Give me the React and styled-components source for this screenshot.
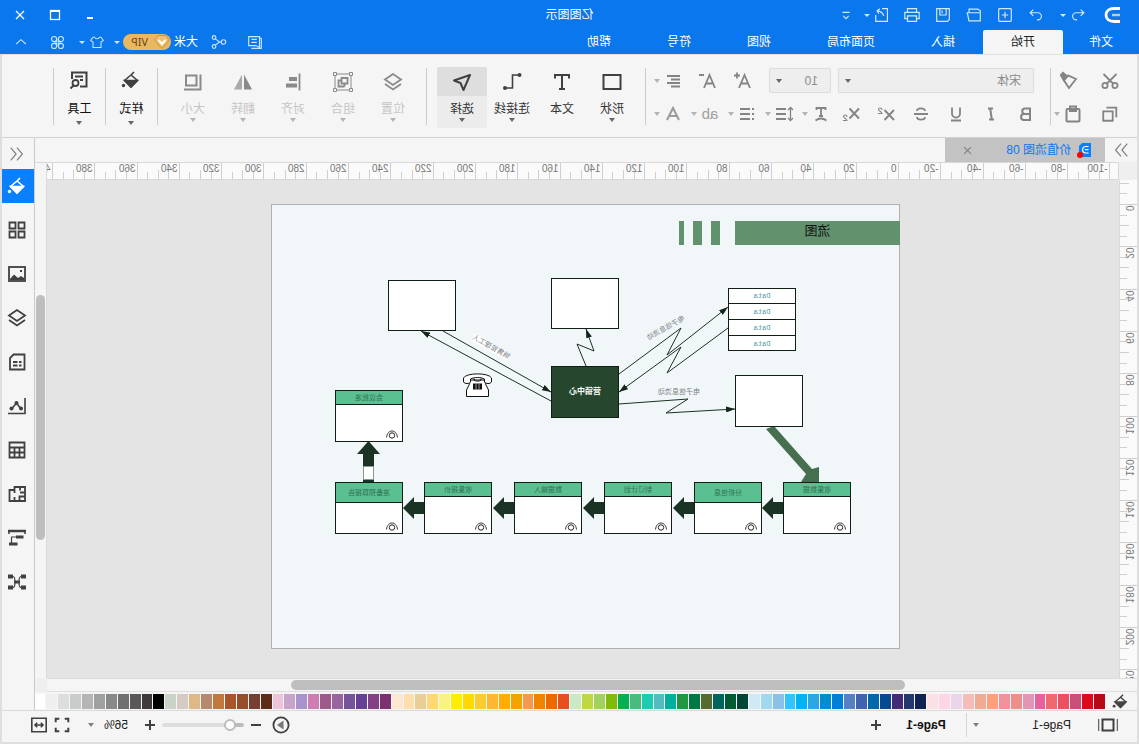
import React from "react";
import styled, { createGlobalStyle } from "styled-components";

const UI_FONT = `"Liberation Sans", "Noto Sans CJK SC", sans-serif`;

const GlobalStyle = createGlobalStyle`
  * {
    box-sizing: border-box;
  }
  body {
    margin: 0;
    background: #f5f5f5;
  }
  button, select, input {
    font: inherit;
    color: inherit;
    margin: 0;
    padding: 0;
    border: 0;
    background: none;
  }
  button svg {
    flex: none;
  }
`;

// the whole window is flipped horizontally
const Window = styled.div`
  display: flex;
  flex-direction: column;
  height: 100vh;
  transform: scaleX(-1);
  background: #f5f5f5;
  font-family: ${UI_FONT};
  font-size: 12px;
  line-height: 16px;
  color: #333;
  overflow: hidden;
`;

const Header = styled.header`
  flex: none;
  background: #0a77ec;
  color: #fff;
`;

const TitleRow = styled.div`
  display: grid;
  grid-template-columns: 1fr auto 1fr;
  align-items: center;
  height: 30px;
`;

const Title = styled.h1`
  margin: 0;
  font-size: 12px;
  font-weight: 400;
`;

const QuickBar = styled.div`
  display: flex;
  align-items: center;
  color: #d4e8fd;
`;

const LogoBox = styled.div`
  display: flex;
  justify-content: center;
  width: 46px;
  padding-left: 8px;
`;

const QuickBtn = styled.button`
  display: flex;
  align-items: center;
  justify-content: ${(p) => (p.$split ? "flex-start" : "center")};
  gap: 3px;
  width: ${(p) => p.$w || 31}px;
  height: 24px;
  padding-left: ${(p) => (p.$split ? 6 : 0)}px;
`;

const WindowControls = styled.div`
  display: flex;
  justify-content: flex-end;
  padding-right: 3px;
`;

const MenuRow = styled.div`
  display: flex;
  justify-content: space-between;
  height: 24px;
`;

const MenuTabs = styled.nav`
  display: flex;
`;

const MenuTab = styled.button`
  padding: 0 ${(p) => (p.$first ? 26 : 28)}px;
  border-radius: 2px 2px 0 0;
  background: ${(p) => (p.$active ? "#f5f5f5" : "transparent")};
  color: ${(p) => (p.$active ? "#222" : "#fff")};
`;

const AccountBar = styled.div`
  display: flex;
  align-items: center;
  gap: 9px;
  padding-right: 13px;
  color: #cfe4fc;
`;

const Cluster = styled.div`
  display: flex;
  align-items: center;
  gap: ${(p) => p.$gap || 4}px;
  margin-right: ${(p) => p.$after || 0}px;
`;

const PlainBtn = styled.button`
  display: flex;
  align-items: center;
  justify-content: center;
  min-width: 16px;
  height: 20px;
`;

const UserName = styled.span`
  color: #fff;
`;

const VipBadge = styled.span`
  display: flex;
  align-items: center;
  justify-content: flex-end;
  gap: 6px;
  width: 48px;
  height: 16px;
  padding-right: 8px;
  border-radius: 8px;
  background: #e9b95f;
  color: #6b4713;
  font-family: "Noto Sans", sans-serif;
  font-size: 11px;
`;

const Caret = styled.span`
  flex: none;
  width: 0;
  height: 0;
  border: 3px solid transparent;
  border-top: ${(p) => p.$h || 4}px solid ${(p) => p.$color || "currentColor"};
  border-bottom: 0;
`;

const Body = styled.div`
  flex: 1;
  display: flex;
  flex-direction: column;
  min-height: 0;
  border: 2px solid #dedede;
  border-top: 0;
`;

/* ---------- ribbon ---------- */

const Ribbon = styled.section`
  flex: none;
  display: flex;
  height: 84px;
  padding: 12px 0 0 17px;
  border-top: 1px solid #e0e0e0;
  border-bottom: 1px solid #d2d2d2;
  color: #848484;
`;

const Separator = styled.div`
  flex: none;
  width: 1px;
  height: 57px;
  margin: 1px ${(p) => p.$after || 0}px 0 ${(p) => p.$before || 0}px;
  background: #cdcdcd;
`;

const RibbonGroup = styled.div`
  flex: none;
  display: flex;
  flex-direction: column;
  gap: 11px;
  width: ${(p) => p.$w}px;
  padding-top: 1px;
`;

const RibbonRow = styled.div`
  display: flex;
  align-items: center;
  justify-content: space-between;
  height: ${(p) => p.$h || 25}px;
`;

const RibbonBtn = styled.button`
  display: flex;
  align-items: center;
  justify-content: center;
  gap: 3px;
  width: ${(p) => p.$w || 20}px;
  height: 20px;
`;

const SelectBox = styled.label`
  position: relative;
  display: flex;
  align-items: center;
  width: ${(p) => p.$w}px;
  height: 25px;
  border: 1px solid #dcdce0;
  border-radius: 2px;
  background: #eee;

  select {
    width: 100%;
    height: 100%;
    padding-left: 12px;
    appearance: none;
    color: #8a8a8a;
  }
  span {
    position: absolute;
    right: 6px;
    color: #666;
  }
`;

const HighlightText = styled.span`
  width: 20px;
  font-size: 15px;
  color: #a0a0a0;
`;

const ToolBtn = styled.button`
  flex: none;
  display: flex;
  flex-direction: column;
  align-items: center;
  width: ${(p) => p.$w || 50}px;
  height: 61px;
  border-radius: 2px;
  background: ${(p) => (p.$active ? "#ececec" : "transparent")};
  color: ${(p) => (p.$muted ? "#c6c6c6" : p.$strong ? "#111" : "#333")};
`;

const ToolIcon = styled.span`
  display: flex;
  align-items: center;
  justify-content: center;
  width: 100%;
  height: 29px;
  padding-bottom: ${(p) => (p.$strong ? 4 : 0)}px;
  margin-bottom: 5px;
  border-radius: 2px 2px 0 0;
  background: ${(p) => (p.$active ? "#dedede" : "transparent")};
  color: ${(p) => (p.$muted ? "#8a8a8a" : "#404040")};
`;

const ToolLabel = styled.span`
  margin-bottom: ${(p) => (p.$strong ? 4 : 1)}px;
`;

/* ---------- workspace ---------- */

const Middle = styled.div`
  flex: 1;
  display: flex;
  min-height: 0;
`;

const Main = styled.main`
  flex: 1;
  display: flex;
  flex-direction: column;
  min-width: 0;
`;

const DocTabs = styled.div`
  flex: none;
  display: flex;
  align-items: center;
  height: 24px;
  color: #808080;
`;

const Collapse = styled.button`
  display: flex;
  align-items: center;
  justify-content: center;
  width: 32px;
  height: 24px;
`;

const DocTab = styled.div`
  display: flex;
  align-items: center;
  gap: 6px;
  width: 160px;
  height: 24px;
  padding: 0 14px 0 12px;
  background: #c3c3c3;

  a {
    flex: 1;
    color: #0a77ec;
    text-decoration: none;
  }
`;

const Workspace = styled.div`
  flex: 1;
  display: grid;
  grid-template-columns: 18px 1fr 12px;
  grid-template-rows: 18px 1fr 14px;
  min-height: 0;
`;

const Corner = styled.div`
  background: #efefef;
`;

const RulerTop = styled.div`
  overflow: hidden;
  border-top: 1px solid #d9d9d9;
  border-bottom: 1px solid #d9d9d9;
  border-left: 1px solid #d9d9d9;
  background: #fafafa;
`;

const RulerSide = styled.div`
  overflow: hidden;
  border-right: 1px solid #d9d9d9;
  background: #fafafa;
`;

const RulerSvg = styled.svg`
  display: block;
  width: 100%;
  height: 100%;
  font-size: 10px;
  fill: #777;
`;

const ScrollY = styled.div`
  grid-row: 1 / 3;
  grid-column: 3;
  padding: 132px 1px 0;
  border-top: 1px solid #d9d9d9;
  border-left: 1px solid #dcdcdc;
`;

const ThumbY = styled.div`
  height: 64%;
  border-radius: 5px;
  background: #bebebe;
`;

const ScrollX = styled.div`
  grid-column: 1 / 3;
  padding: 1px 244px 0 232px;
  border-top: 1px solid #dedede;
  border-bottom: 1px solid #dedede;
`;

const ThumbX = styled.div`
  height: 10px;
  border-radius: 5px;
  background: #bebebe;
`;

const Canvas = styled.div`
  overflow: hidden;
  padding: 24px 0 0 219px;
  background: #e4e4e4;
`;

const Page = styled.div`
  position: relative;
  width: 629px;
  height: 445px;
  border: 1px solid #b0b0b0;
  background: #f1f7f8;
  font-size: 7px;
  line-height: 8px;
  color: #54806c;
`;

const Wires = styled.svg`
  position: absolute;
  left: -1px;
  top: -1px;
`;

const Shape = styled.div`
  position: absolute;
  left: ${(p) => p.$x - 1}px;
  top: ${(p) => p.$y - 1}px;
  width: ${(p) => p.$w || 68}px;
  height: ${(p) => p.$h || 52}px;
`;

const Band = styled(Shape)`
  background: #62916d;
  color: #111;
  font-size: 13px;
  line-height: 20px;
  text-align: center;
`;

const Box = styled(Shape)`
  border: 1px solid #0f1f16;
  background: #fff;
`;

const Hub = styled(Box)`
  display: flex;
  align-items: center;
  justify-content: center;
  background: #26472e;
  color: #fff;
  font-size: 8px;
  font-weight: 700;
`;

const StepHead = styled.div`
  display: flex;
  align-items: center;
  justify-content: center;
  height: ${(p) => (p.$tall ? 20 : 14)}px;
  border-bottom: 1px solid #0f1f16;
  background: #5abf91;
  color: #2f7353;
`;

const DataRow = styled.div`
  display: flex;
  align-items: center;
  justify-content: center;
  height: ${(p) => (p.$edge ? 15 : 16)}px;
  border-bottom: ${(p) => (p.$last ? 0 : 1)}px solid #0f1f16;
  font-family: "Liberation Mono", monospace;
  color: #4f9aa8;
`;

const Note = styled(Shape)`
  width: auto;
  height: 8px;
  white-space: nowrap;
  transform: rotate(${(p) => p.$angle || 0}deg);
  background: ${(p) => (p.$paper ? "#fff" : "transparent")};
  color: #7d7f86;
`;

/* ---------- palette, rail, status bar ---------- */

const Palette = styled.div`
  flex: none;
  display: flex;
  align-items: center;
  height: 18px;
  color: #444;
`;

const PaletteIcon = styled.div`
  display: flex;
  justify-content: center;
  width: 32px;
`;

const Swatches = styled.div`
  flex: 1;
  display: flex;
  gap: 1px;
`;

const Swatch = styled.button`
  flex: 1;
  height: 15px;
  background: ${(p) => p.$color};
`;

const Rail = styled.aside`
  flex: none;
  display: flex;
  flex-direction: column;
  width: 33px;
  border-left: 1px solid #cbcbcb;
  color: #808080;
`;

const RailTop = styled.div`
  display: flex;
  align-items: center;
  justify-content: center;
  height: 31px;
  padding-left: 2px;
`;

const RailBtn = styled.button`
  display: flex;
  align-items: center;
  justify-content: center;
  height: 34px;
  padding-left: 2px;
  margin-bottom: 10px;
  background: ${(p) => (p.$active ? "#0a80ff" : "transparent")};
  color: ${(p) => (p.$active ? "#fff" : "#404040")};
`;

const StatusBar = styled.footer`
  flex: none;
  display: flex;
  align-items: center;
  justify-content: space-between;
  height: 32px;
  padding: 0 28px 4px 19px;
  border-top: 1px solid #dadada;
  color: #404040;
`;

const PagePicker = styled.label`
  position: relative;
  display: flex;
  align-items: center;
  width: 123px;
  height: 24px;
  margin-left: 8px;
  border-right: 1px solid #d6d6d6;

  select {
    width: 100%;
    padding-left: 18px;
    appearance: none;
    color: #222;
  }
  span {
    position: absolute;
    right: 6px;
    color: #808080;
  }
`;

const PageTab = styled.button`
  width: 78px;
  color: #111;
  font-weight: 700;
`;

const ZoomSlider = styled.input`
  appearance: none;
  width: 82px;
  height: 4px;
  border-radius: 2px;
  background: linear-gradient(to right, #bcbcbc 18%, #dedede 18%);

  &::-webkit-slider-thumb {
    appearance: none;
    width: 12px;
    height: 12px;
    border: 2px solid #bcbcbc;
    border-radius: 50%;
    background: #fff;
  }
`;

const ZoomValue = styled.span`
  color: #222;
`;

/* ---------- icons ---------- */

const ICONS = {
  undo: (
    <path d="M7 4 L3.5 7.5 L7 11 M4 7.5 H12 a4 4 0 0 1 4 4 a4 4 0 0 1 -4 4 H11" />
  ),
  redo: (
    <path d="M13 4 L16.500 7.5 L13 11 M16 7.5 H8 a4 4 0 0 0 -4 4 a4 4 0 0 0 4 4 H9" />
  ),
  plusBox: (
    <>
      <rect x="3" y="3" width="14" height="14" rx="1" />
      <path d="M10 6.500 V13.500 M6.500 10 H13.500" />
    </>
  ),
  folder: (
    <path d="M3 8 V16.500 H15.500 L17.500 7.500 H3 M3 8 V5 L6 3.500 H15.500 V7.500" />
  ),
  save: (
    <path d="M3 3 H17 V17 H5 L3 15 Z M6.500 3 V10 H13.500 V3 M11 5 V8" />
  ),
  print: (
    <path d="M5 7 V3 H15 V7 M5 14 H2 V7 H18 V14 H15 M5 11 H15 V17 H5 Z" />
  ),
  export: (
    <path d="M10 3 H4 V17 H17 V10 M8 11 C9 8 11 6 15 5.500 M12.500 3 L15.500 5.500 L13.500 8.500" />
  ),
  more: <path d="M6 7 H14 M7 11 L10 14 L13 11" />,
  minimize: <path d="M7 13 H13" strokeWidth="2" />,
  maximize: (
    <>
      <rect x="5.500" y="5.500" width="9" height="9" />
      <path d="M5.500 6 H14.500" strokeWidth="2" />
    </>
  ),
  close: <path d="M6 6 L14 14 M14 6 L6 14" />,
  comment: (
    <path d="M5 4 H17 V14 H9 L5 16 Z M5 6 H3 V17 H14 M8 7 H14 M8 10.500 H14" />
  ),
  share: (
    <>
      <circle cx="5" cy="10" r="2.500" />
      <circle cx="15.500" cy="5" r="2" />
      <circle cx="15.500" cy="15" r="2" />
      <path d="M7.500 10 H9.500 L14 6.500 M9.500 10 L14 13.500" />
    </>
  ),
  shirt: (
    <path d="M7 4 C8 6.500 12 6.500 13 4 L15 4 L18 8 L15 10 V17 H5 V10 L2 8 L5 4 Z" />
  ),
  clover: (
    <>
      <circle cx="6" cy="6" r="3" />
      <circle cx="14" cy="6" r="3" />
      <circle cx="6" cy="14" r="3" />
      <circle cx="14" cy="14" r="3" />
      <path d="M9 6 V9 H6 M11 6 V9 H14 M9 14 V11 H6 M11 14 V11 H14" />
    </>
  ),
  chevUp: <path d="M4 12.500 L10 7 L16 12.500" />,
  cut: (
    <g strokeWidth="1.800">
      <circle cx="5" cy="14.500" r="2.600" />
      <circle cx="15" cy="14.500" r="2.600" />
      <path d="M3.500 3 L13 12.500 M16.500 3 L7 12.500" />
    </g>
  ),
  brush: (
    <>
      <path d="M3 8 L11 4.500 L15 9.500 L10 17 Z" strokeWidth="1.900" />
      <path d="M11.500 5.500 L16 1.500 L18.500 4 L15.500 9.500 Z" fill="currentColor" />
    </>
  ),
  copy: (
    <path d="M7 7 H17.500 V17.500 H7 Z M3 13.500 V3 H14" strokeWidth="2" />
  ),
  paste: (
    <>
      <rect x="3.500" y="5" width="13" height="12.500" rx="1" strokeWidth="2" />
      <path d="M7 2.500 H13 V7 H7 Z" strokeWidth="2" />
    </>
  ),
  growFont: (
    <path d="M3 17 L8.500 4 L14 17 M5 12.500 H12 M13 4.500 H19 M16 1.500 V7.500" strokeWidth="1.800" />
  ),
  shrinkFont: (
    <path d="M3 17 L8.500 4 L14 17 M5 12.500 H12 M14 4 H19" strokeWidth="1.800" />
  ),
  alignLeft: <path d="M3 5 H16 M3 8.500 H12 M3 12 H16 M3 15.500 H12" strokeWidth="2" />,
  bold: (
    <path d="M6 4.500 H11 a2.700 2.700 0 0 1 0 5.500 H6 Z M6 10 H12 a3 3 0 0 1 0 6 H6 Z" strokeWidth="2" />
  ),
  italic: <path d="M7 4.500 H12 M8 15.500 H13 M9.200 4.500 L10.800 15.500" strokeWidth="2" transform="matrix(-1 0 0 1 20 0)" />,
  underline: (
    <path d="M6 3.500 V9.500 a4 4 0 0 0 8 0 V3.500 M5 16.500 H15" strokeWidth="1.800" />
  ),
  strike: (
    <path d="M14 7 C14 3.500 6 3.500 6 7 M6 13 C6 16.500 14 16.500 14 13 M3 10 H17" strokeWidth="1.800" />
  ),
  sup: (
    <>
      <path d="M2 6 L11.500 16 M11.500 6 L2 16" strokeWidth="1.900" />
      <path d="M14 6 C14 3.500 17.500 3.500 17.500 5.500 C17.500 7 14 7.500 14 9.500 H18" strokeWidth="1.100" />
    </>
  ),
  sub: (
    <>
      <path d="M2 4.500 L11.500 14.500 M11.500 4.500 L2 14.500" strokeWidth="1.900" />
      <path d="M14 13 C14 10.500 17.500 10.500 17.500 12.500 C17.500 14 14 14.500 14 16.500 H18" strokeWidth="1.100" />
    </>
  ),
  textFx: (
    <path d="M5.500 6 V4 H14.500 V6 M10 4 V12 M8 12 H12 M4.500 16.500 C8 14 12 14 15.500 16.500" strokeWidth="1.800" />
  ),
  spacing: (
    <>
      <path d="M8 5 H18 M8 10 H18 M8 15 H18" strokeWidth="2" />
      <path d="M3.500 4 V16 M1 6 L3.500 3.500 L6 6 M1 14 L3.500 16.500 L6 14" />
    </>
  ),
  bullets: (
    <path d="M7 5 H17 M7 10 H17 M7 15 H17 M3 5 H5 M3 10 H5 M3 15 H5" strokeWidth="2" />
  ),
  fontColor: (
    <path d="M4 16 L10 4 L16 16 M6.500 12 H13.500" strokeWidth="2" opacity=".8" />
  ),
  shape: <rect x="1.500" y="3" width="17" height="14" strokeWidth="2" />,
  text: (
    <path d="M3 6.500 V3 H17 V6.500 M10 3 V17 M7 17 H13" strokeWidth="2" />
  ),
  connector: (
    <>
      <path d="M3 3 H9.500 V16 H16" strokeWidth="1.600" />
      <circle cx="2.500" cy="3" r="2" fill="currentColor" stroke="none" />
      <circle cx="17" cy="16" r="2" fill="currentColor" stroke="none" />
    </>
  ),
  pointer: (
    <path d="M2 3 L18 8.500 L11.500 11 L8.500 18 Z" strokeWidth="2" strokeLinejoin="round" />
  ),
  layers: (
    <path d="M10 2 L18 7.500 L10 13 L2 7.500 Z M2 12 L10 17.500 L18 12" strokeWidth="1.800" />
  ),
  group: (
    <>
      <path d="M2 2 H18 V18 H2 Z" strokeWidth="1" />
      <path d="M5.500 6 H11.500 V11.500 H5.500 Z M8.500 14.500 H14.500 V8.500 H12 M8.500 14.500 V12" strokeWidth="1.800" />
      <path d="M.500 .500 H3.500 V3.500 H.500 Z M16.500 .500 H19.500 V3.500 H16.500 Z M.500 16.500 H3.500 V19.500 H.500 Z M16.500 16.500 H19.500 V19.500 H16.500 Z" fill="#f5f5f5" strokeWidth="1" />
    </>
  ),
  alignObj: (
    <>
      <path d="M3.500 1.500 V18.500" strokeWidth="1.800" />
      <path d="M6 5 H14 V9 H6 Z M6 11.500 H17 V15.500 H6 Z" fill="currentColor" stroke="none" />
    </>
  ),
  flip: (
    <>
      <path d="M9 2.500 V17.500 H1 Z" fill="currentColor" stroke="none" />
      <path d="M11 2.500 V17.500 H19 Z" fill="currentColor" stroke="none" opacity=".7" />
    </>
  ),
  size: (
    <path d="M6.500 3.500 H17 V13.500 H6.500 Z M2.500 2.500 V17.500 H19" strokeWidth="2" />
  ),
  bucket: (
    <>
      <path d="M10 5 L16.500 10.500 L10 17 L3.500 10.500 Z M10 5 L7 2" strokeWidth="1.600" />
      <path d="M3.500 10.500 H16.500 L10 17 Z" fill="currentColor" />
      <circle cx="17.500" cy="15.500" r="1.700" fill="currentColor" stroke="none" />
    </>
  ),
  find: (
    <>
      <path d="M9 16.500 H2.500 V2.500 H17 V9 M6 6.500 H14 M6 10 H9" strokeWidth="2" />
      <circle cx="13.500" cy="13" r="3" strokeWidth="1.800" />
      <path d="M15.500 15.500 L18.500 18.500" strokeWidth="2" />
    </>
  ),
  dblLeft: <path d="M10 3 L4 10 L10 17 M17 3 L11 10 L17 17" />,
  dblRight: <path d="M3 3 L9 10 L3 17 M10 3 L16 10 L10 17" />,
  grid: (
    <path d="M2.500 2.500 H8.500 V8.500 H2.500 Z M11.500 2.500 H17.500 V8.500 H11.500 Z M2.500 11.500 H8.500 V17.500 H2.500 Z M11.500 11.500 H17.500 V17.500 H11.500 Z" strokeWidth="1.800" />
  ),
  image: (
    <>
      <rect x="2" y="3" width="16" height="14" strokeWidth="1.800" />
      <path d="M3 16 V14 L6 12 L9 14 L13 10.500 L17 15 V16 Z" fill="currentColor" stroke="none" />
      <rect x="5" y="6" width="2" height="2" fill="currentColor" stroke="none" />
    </>
  ),
  doc: (
    <path d="M2.500 2.500 H13.500 L17 6 V17.500 H2.500 Z M5.500 10 H8 M9.500 10 H14 M5.500 13.500 H8 M9.500 13.500 H14" strokeWidth="1.800" />
  ),
  chart: (
    <>
      <path d="M2 2 V17.500 H19 M6 13 L10.500 7 L15 12.500" strokeWidth="1.600" />
      <circle cx="6" cy="12.500" r="2" fill="currentColor" stroke="none" />
      <circle cx="10.500" cy="7" r="2" fill="currentColor" stroke="none" />
      <circle cx="15.500" cy="12.500" r="2" fill="currentColor" stroke="none" />
    </>
  ),
  table: (
    <path d="M2.500 2.500 H17.500 V17.500 H2.500 Z M2.500 7.500 H17.500 M2.500 12.500 H17.500 M7.500 7.500 V17.500 M12.500 7.500 V17.500" strokeWidth="1.800" />
  ),
  floor: (
    <path d="M2 3 H12.500 V6 H17.500 V17 H2 Z M2.500 8.500 H7 M7 3 V6.500 M2.500 12.500 H7.500 V17 M12.500 13 V17 M12.500 5 V9" strokeWidth="1.800" />
  ),
  gantt: (
    <>
      <path d="M1 3 H19" strokeWidth="2.500" />
      <path d="M2 3 V6 M18 3 V6" strokeWidth="1.500" />
      <path d="M3.500 9 H11 M9.500 16 H18" strokeWidth="2.800" />
      <path d="M10 9 H15.500 V16" strokeWidth="1.200" />
    </>
  ),
  mind: (
    <>
      <path d="M3 4.500 H6 C8 4.500 8 7 8 10 C8 13 8 15.500 6 15.500 H3 M17 4.500 H14 C12 4.500 12 7 12 10 C12 13 12 15.500 14 15.500 H17" strokeWidth="1.200" />
      <path d="M1 4.500 H6 M14 4.500 H19 M1 15.500 H6 M14 15.500 H19" strokeWidth="3.800" />
      <path d="M7 10 H13" strokeWidth="3" />
    </>
  ),
  pages: (
    <>
      <path d="M4.500 4.500 H15.500 V15.500 H4.500 Z" strokeWidth="2" />
      <path d="M0.500 4 V16 M19.500 4 V16" strokeWidth="1.500" opacity=".8" />
    </>
  ),
  plus: <path d="M5 10 H15 M10 5 V15" strokeWidth="2" />,
  minus: <path d="M5 10 H15" strokeWidth="2" />,
  play: (
    <>
      <circle cx="10" cy="10" r="7.600" strokeWidth="1.800" />
      <path d="M7.500 5.500 V14.500 L14 10 Z" fill="#777" stroke="none" />
    </>
  ),
  full: (
    <path d="M3 7 V3 H7 M13 3 H17 V7 M17 13 V17 H13 M7 17 H3 V13" strokeWidth="2.200" />
  ),
  fit: (
    <path d="M2 2.500 H18 V17.500 H2 Z M5 10 H15 M8 7.500 L5.500 10 L8 12.500 M12 7.500 L14.500 10 L12 12.500" strokeWidth="1.800" />
  ),
};

function Icon({ name, size = 18 }) {
  return (
    <svg
      width={size}
      height={size}
      viewBox="0 0 20 20"
      fill="none"
      stroke="currentColor"
      strokeWidth="1.3"
      aria-hidden="true"
    >
      {ICONS[name]}
    </svg>
  );
}

/* ---------- data ---------- */

const MENUS = ["文件", "开始", "插入", "页面布局", "视图", "符号", "帮助"];

const FORMATS = [
  ["bold", "加粗"],
  ["italic", "斜体"],
  ["underline", "下划线"],
  ["strike", "删除线"],
  ["sup", "上标"],
  ["sub", "下标"],
];

const DRAW_TOOLS = [
  { icon: "shape", label: "形状", caret: true },
  { icon: "text", label: "文本" },
  { icon: "connector", label: "连接线", caret: true },
  { icon: "pointer", label: "选择", caret: true, active: true },
];

const ARRANGE_TOOLS = [
  { icon: "layers", label: "位置" },
  { icon: "group", label: "组合" },
  { icon: "alignObj", label: "对齐" },
  { icon: "flip", label: "翻转" },
  { icon: "size", label: "大小" },
];

const RAIL = [
  ["bucket", "样式"],
  ["grid", "符号库"],
  ["image", "图片"],
  ["layers", "图层"],
  ["doc", "文档"],
  ["chart", "图表"],
  ["table", "表格"],
  ["floor", "平面图"],
  ["gantt", "甘特图"],
  ["mind", "思维导图"],
];

const COLORS = (
  "b70a18 dd0a1e c94f78 ea5062 ee6a6f e8609c e196b5 ee8e88 f0929c ffa07a f0ab94 f6bcb9 ead6e8 fdd5e5 fde0e3 " +
  "0f2352 24386f 432b77 074890 0468a8 4163ae 5581c3 0080d3 028ece 2ca7e2 00b4f0 32c5fb 8bc0e9 a0d8ef cfeaf6 " +
  "004637 015a32 00655c 566b2f 007a45 1f963f 00af9c 54bcbf 1ccbb0 49bb7e 04b052 81b90d a3d062 bed742 cbe8c7 " +
  "e5501e ee6800 f08300 f39950 f0a500 ffae00 ffb732 fbcb32 ffd900 ffee00 faf282 ffd774 eace98 ffdead fce8d0 " +
  "7b306f 844084 674196 765499 9965a0 9d5a8b cd7db1 a993cd c7a5cb eec3dc " +
  "5c2b1a 773f32 964d2a aa5529 c1783f b6886d deb887 d6cbc4 cbd3c9 " +
  "000000 3f3939 595757 717071 898989 9fa0a0 b5b5b6 cacccb dcdddd efefef ffffff"
).split(" ");

const STEPS = [
  { x: 49, y: 278, label: "收集数据" },
  { x: 138, y: 278, label: "分析信息", tall: true },
  { x: 228, y: 278, label: "制订计划" },
  { x: 318, y: 278, label: "数据输入" },
  { x: 408, y: 278, label: "收集报价" },
  { x: 497, y: 278, label: "准备预算报告", tall: true },
  { x: 497, y: 186, label: "会议批准" },
];

/* ---------- parts ---------- */

const UNIT = 42.3; // px per 20 ruler units

function HorizontalRuler() {
  const ticks = [];
  for (let n = -20; n <= 80; n++) {
    const x = Math.round(219 + (n * UNIT) / 4) + 0.5;
    const major = n % 4 === 0;
    const top = major ? 0 : n % 2 === 0 ? 7 : 9;
    ticks.push(
      <g key={n}>
        <path d={`M${x} ${top} V16`} stroke="#cfcfcf" />
        {major && (
          <text x={x + 2} y="9">
            {n * 5}
          </text>
        )}
      </g>
    );
  }
  return (
    <RulerTop>
      <RulerSvg>{ticks}</RulerSvg>
    </RulerTop>
  );
}

function VerticalRuler() {
  const ticks = [];
  for (let n = -2; n <= 44; n++) {
    const y = Math.round(24 + (n * UNIT) / 4) + 0.5;
    const major = n % 4 === 0;
    const left = major ? 0 : n % 2 === 0 ? 8 : 10;
    ticks.push(
      <g key={n}>
        <path d={`M${left} ${y} H17`} stroke="#cfcfcf" />
        {major && (
          <text
            transform={`translate(11 ${y + 1}) rotate(-90)`}
            textAnchor="end"
          >
            {n * 5}
          </text>
        )}
      </g>
    );
  }
  return (
    <RulerSide>
      <RulerSvg>{ticks}</RulerSvg>
    </RulerSide>
  );
}

function Tool({ icon, label, caret, active, muted, strong, w }) {
  return (
    <ToolBtn $active={active} $muted={muted} $strong={strong} $w={w}>
      <ToolIcon $active={active} $muted={muted} $strong={strong}>
        <Icon name={icon} size={20} />
      </ToolIcon>
      <ToolLabel $strong={strong}>{label}</ToolLabel>
      {caret && <Caret $color={muted ? "#b4b4b4" : "#666"} />}
    </ToolBtn>
  );
}

function SplitBtn({ name, label, w = 29 }) {
  return (
    <RibbonBtn $w={w} aria-label={label}>
      <Icon name={name} size={20} />
      <Caret $color="#b4b4b4" />
    </RibbonBtn>
  );
}

function HighlightBtn() {
  return (
    <RibbonBtn $w={29} aria-label="突出显示">
      <HighlightText>ab</HighlightText>
      <Caret $color="#b4b4b4" />
    </RibbonBtn>
  );
}

function EyeMark({ x, y }) {
  return (
    <g transform={`translate(${x} ${y})`} fill="none" stroke="#222">
      <circle cx="6" cy="5.500" r="2.700" />
      <path d="M0.500 7.500 C1 3 3.500 1 6 1 C8.500 1 11 3 11.500 7.500" strokeWidth=".9" />
    </g>
  );
}

function Diagram() {
  return (
    <Page>
      <Band $x={0} $y={17} $w={165} $h={24}>
        流图
      </Band>
      <Band $x={180} $y={17} $w={9} $h={24} />
      <Band $x={198} $y={17} $w={9} $h={24} />
      <Band $x={216} $y={17} $w={5} $h={24} />

      <Wires width="629" height="445">
        <defs>
          <marker
            id="tip"
            viewBox="0 0 9 6"
            refX="9"
            refY="3"
            markerWidth="9"
            markerHeight="6"
            orient="auto"
          >
            <path d="M0 0 L9 3 L0 6 Z" fill="#14261b" />
          </marker>
        </defs>
        <g fill="none" stroke="#1c3024">
          <path d="M314 162 L323 140 L306 147 L314 125" markerEnd="url(#tip)" />
          <path d="M281 170 L219 124 L233 151 L172 103" markerEnd="url(#tip)" />
          <path d="M172 124 L233 169 L219 143 L281 188" markerEnd="url(#tip)" />
          <path d="M281 200 L212 195 L234 209 L165 205" markerEnd="url(#tip)" />
          <path d="M457 127 L349 188" markerEnd="url(#tip)" />
          <path d="M349 197 L479 127" markerEnd="url(#tip)" />
        </g>
        <path
          d="M134 225 L126 222 L88 265 L81 263 L81 280 L99 278 L94 270 Z"
          fill="#466f50"
        />
        {[117, 206, 296, 386, 476].map((x) => (
          <path
            key={x}
            d={`M${x} 293 V315 M${x} 298 H${x + 10} V293 L${x + 21} 304 L${x + 10} 315 V310 H${x} Z`}
            fill="#1b3325"
          />
        ))}
        <path d="M526 278 V250 H520 L531.500 237 L543 250 H537 V278 Z" fill="#1b3325" />
        <path d="M526.500 262.500 H536.500 V275.500 H526.500 Z" fill="#fff" stroke="#8a9a90" />
        <g transform="translate(408 169)" stroke="#111" fill="#fff">
          <path d="M8 7 C7 8 7 10 6 12 L3.500 17 V23.500 H25.500 V17 L23 12 C22 10 22 8 21 7 Z" />
          <path d="M0.500 9 V5 C3 -0.500 26 -0.500 28.500 5 V9 C27 11 23 11 21.500 9 V6 C18 4 11 4 7.500 6 V9 C6 11 2 11 0.500 9 Z" />
          <path d="M11 5.500 V7 C12 8.500 17 8.500 18 7 V5.500" fill="none" />
          <path d="M10 10.500 H19 V16.500 H10 Z" fill="#111" stroke="none" />
          <path d="M13 10.500 V16.500 M16 10.500 V16.500" stroke="#bbb" strokeWidth=".8" />
        </g>
      </Wires>

      <Box $x={281} $y={74} $h={51} />
      <Box $x={444} $y={76} $h={51} />
      <Box $x={97} $y={171} />
      <Box $x={104} $y={84} $h={63}>
        <DataRow $edge>Data</DataRow>
        <DataRow>Data</DataRow>
        <DataRow>Data</DataRow>
        <DataRow $edge $last>
          Data
        </DataRow>
      </Box>
      <Hub $x={281} $y={162}>
        营销中心
      </Hub>

      {STEPS.map((s) => (
        <Box key={s.label} $x={s.x} $y={s.y}>
          <StepHead $tall={s.tall}>{s.label}</StepHead>
        </Box>
      ))}
      <Wires width="629" height="445">
        {STEPS.map((s) => (
          <EyeMark key={s.label} x={s.x + 5} y={s.y + 40} />
        ))}
      </Wires>

      <Note $x={213} $y={120} $angle={29}>
        电子信息流动
      </Note>
      <Note $x={200} $y={184}>
        电子信息流动
      </Note>
      <Note $x={388} $y={139} $angle={-29} $paper>
        销售管理工人
      </Note>
    </Page>
  );
}

function App() {
  return (
    <>
      <GlobalStyle />
      <Window>
        <Header>
          <TitleRow>
            <QuickBar>
              <LogoBox>
                <svg width="16" height="18" viewBox="0 0 16 18" fill="none" aria-hidden="true">
                  <path d="M0 2.500 H6 C11 2.500 14 5 14 9 C14 13 11 15.500 6 15.500 H0" stroke="#fff" strokeWidth="2.800" />
                  <path d="M0 9 H8" stroke="#a8d0fa" strokeWidth="2.400" />
                </svg>
              </LogoBox>
              <QuickBtn $split $w={41} aria-label="撤销">
                <Icon name="undo" />
                <Caret $h={3} />
              </QuickBtn>
              <QuickBtn aria-label="恢复">
                <Icon name="redo" />
              </QuickBtn>
              <QuickBtn aria-label="新建">
                <Icon name="plusBox" />
              </QuickBtn>
              <QuickBtn aria-label="打开">
                <Icon name="folder" />
              </QuickBtn>
              <QuickBtn aria-label="保存">
                <Icon name="save" />
              </QuickBtn>
              <QuickBtn aria-label="打印">
                <Icon name="print" />
              </QuickBtn>
              <QuickBtn $split $w={38} aria-label="导出">
                <Icon name="export" />
                <Caret $h={3} />
              </QuickBtn>
              <QuickBtn $w={26} aria-label="更多">
                <Icon name="more" />
              </QuickBtn>
            </QuickBar>
            <Title>亿图图示</Title>
            <WindowControls>
              <QuickBtn $w={35} aria-label="最小化">
                <Icon name="minimize" size={20} />
              </QuickBtn>
              <QuickBtn $w={35} aria-label="最大化">
                <Icon name="maximize" size={20} />
              </QuickBtn>
              <QuickBtn $w={35} aria-label="关闭">
                <Icon name="close" size={20} />
              </QuickBtn>
            </WindowControls>
          </TitleRow>
          <MenuRow>
            <MenuTabs>
              {MENUS.map((m, i) => (
                <MenuTab key={m} $first={i === 0} $active={i === 1}>
                  {m}
                </MenuTab>
              ))}
            </MenuTabs>
            <AccountBar>
              <Cluster $gap={18} $after={3}>
                <PlainBtn aria-label="消息">
                  <Icon name="comment" />
                </PlainBtn>
                <PlainBtn aria-label="分享">
                  <Icon name="share" />
                </PlainBtn>
              </Cluster>
              <Cluster $gap={3}>
                <UserName>大米</UserName>
                <VipBadge>
                  <svg width="16" height="14" viewBox="0 0 16 14" fill="none" aria-hidden="true">
                    <path d="M4 0.500 H12 L15.500 5 L8 13.500 L0.500 5 Z" fill="#edc06b" stroke="#c08a35" strokeWidth=".8" />
                    <path d="M4.500 5 L8 9 L11.500 5" stroke="#fff" strokeWidth="2" />
                  </svg>
                  VIP
                </VipBadge>
                <Caret $h={3} />
              </Cluster>
              <Cluster $gap={4} $after={4}>
                <PlainBtn aria-label="皮肤">
                  <Icon name="shirt" size={16} />
                </PlainBtn>
                <Caret $h={3} />
              </Cluster>
              <Cluster $gap={20}>
                <PlainBtn aria-label="应用">
                  <Icon name="clover" size={17} />
                </PlainBtn>
                <PlainBtn aria-label="收起功能区">
                  <Icon name="chevUp" size={16} />
                </PlainBtn>
              </Cluster>
            </AccountBar>
          </MenuRow>
        </Header>

        <Body>
          <Ribbon>
            <RibbonGroup $w={65}>
              <RibbonRow>
                <RibbonBtn aria-label="剪切">
                  <Icon name="cut" size={20} />
                </RibbonBtn>
                <RibbonBtn $w={28} aria-label="格式刷">
                  <Icon name="brush" size={20} />
                </RibbonBtn>
              </RibbonRow>
              <RibbonRow $h={20}>
                <RibbonBtn aria-label="复制">
                  <Icon name="copy" />
                </RibbonBtn>
                <SplitBtn name="paste" label="粘贴" w={28} />
              </RibbonRow>
            </RibbonGroup>
            <Separator $before={4} $after={16} />
            <RibbonGroup $w={380}>
              <RibbonRow>
                <Cluster $gap={7}>
                  <SelectBox $w={196}>
                    <select aria-label="字体">
                      <option>宋体</option>
                    </select>
                    <Caret />
                  </SelectBox>
                  <SelectBox $w={62}>
                    <select aria-label="字号">
                      <option>10</option>
                    </select>
                    <Caret />
                  </SelectBox>
                </Cluster>
                <Cluster $gap={15}>
                  <RibbonBtn aria-label="增大字号">
                    <Icon name="growFont" size={20} />
                  </RibbonBtn>
                  <RibbonBtn aria-label="减小字号">
                    <Icon name="shrinkFont" size={20} />
                  </RibbonBtn>
                  <SplitBtn name="alignLeft" label="对齐方式" />
                </Cluster>
              </RibbonRow>
              <RibbonRow $h={20}>
                <Cluster $gap={19}>
                  {FORMATS.map(([icon, label]) => (
                    <RibbonBtn key={icon} $w={16} aria-label={label}>
                      <Icon name={icon} size={20} />
                    </RibbonBtn>
                  ))}
                </Cluster>
                <Cluster $gap={8}>
                  <SplitBtn name="textFx" label="文字效果" />
                  <SplitBtn name="spacing" label="行距" />
                  <SplitBtn name="bullets" label="项目符号" />
                  <HighlightBtn />
                  <SplitBtn name="fontColor" label="文字颜色" />
                </Cluster>
              </RibbonRow>
            </RibbonGroup>
            <Separator $before={8} $after={8} />
            {DRAW_TOOLS.map((t) => (
              <Tool key={t.label} {...t} />
            ))}
            <Separator $before={10} $after={8} />
            {ARRANGE_TOOLS.map((t) => (
              <Tool key={t.label} {...t} caret muted />
            ))}
            <Separator $before={10} />
            <Tool icon="bucket" label="样式" caret strong w={51} />
            <Separator />
            <Tool icon="find" label="工具" caret strong w={51} />
            <Separator />
          </Ribbon>

          <Middle>
            <Main>
              <DocTabs>
                <Collapse aria-label="展开面板">
                  <Icon name="dblRight" />
                </Collapse>
                <DocTab>
                  <svg width="16" height="16" viewBox="0 0 16 16" fill="none" aria-hidden="true">
                    <path d="M2 1 H11 L14 4 V15 H2 Z" fill="#0a80ff" />
                    <path d="M4.500 4.500 H7 C11.500 4.500 11.500 11 7 11 H4.500 M4.500 7.700 H8" stroke="#fff" strokeWidth="1.200" />
                    <circle cx="13" cy="13" r="3" fill="#f00" />
                  </svg>
                  <a href="#doc">价值流图 08</a>
                  <PlainBtn aria-label="关闭文档">
                    <Icon name="close" size={17} />
                  </PlainBtn>
                </DocTab>
              </DocTabs>
              <Workspace>
                <Corner />
                <HorizontalRuler />
                <VerticalRuler />
                <Canvas>
                  <Diagram />
                </Canvas>
                <ScrollY>
                  <ThumbY />
                </ScrollY>
                <ScrollX>
                  <ThumbX />
                </ScrollX>
                <Corner />
              </Workspace>
              <Palette>
                <PaletteIcon>
                  <Icon name="bucket" size={17} />
                </PaletteIcon>
                <Swatches>
                  {COLORS.map((c) => (
                    <Swatch key={c} $color={`#${c}`} aria-label={`#${c}`} />
                  ))}
                </Swatches>
              </Palette>
            </Main>
            <Rail>
              <RailTop>
                <Icon name="dblLeft" />
              </RailTop>
              {RAIL.map(([icon, label], i) => (
                <RailBtn key={label} $active={i === 0} aria-label={label}>
                  <Icon name={icon} size={20} />
                </RailBtn>
              ))}
            </Rail>
          </Middle>

          <StatusBar>
            <Cluster $gap={1}>
              <PlainBtn aria-label="页面缩略图">
                <Icon name="pages" size={20} />
              </PlainBtn>
              <PagePicker>
                <select aria-label="页面">
                  <option>Page-1</option>
                </select>
                <Caret />
              </PagePicker>
              <PageTab>Page-1</PageTab>
              <PlainBtn aria-label="添加页面">
                <Icon name="plus" size={20} />
              </PlainBtn>
            </Cluster>
            <Cluster $gap={5}>
              <PlainBtn aria-label="播放">
                <Icon name="play" size={20} />
              </PlainBtn>
              <Cluster $gap={2} $after={7}>
                <PlainBtn aria-label="缩小">
                  <Icon name="minus" size={20} />
                </PlainBtn>
                <ZoomSlider type="range" min="0" max="100" defaultValue="12" aria-label="缩放" />
                <PlainBtn aria-label="放大">
                  <Icon name="plus" size={20} />
                </PlainBtn>
              </Cluster>
              <Cluster $gap={10} $after={12}>
                <ZoomValue>56%</ZoomValue>
                <Caret $color="#808080" />
              </Cluster>
              <PlainBtn aria-label="全屏">
                <Icon name="full" />
              </PlainBtn>
              <PlainBtn aria-label="适应宽度">
                <Icon name="fit" />
              </PlainBtn>
            </Cluster>
          </StatusBar>
        </Body>
      </Window>
    </>
  );
}

export default App;
